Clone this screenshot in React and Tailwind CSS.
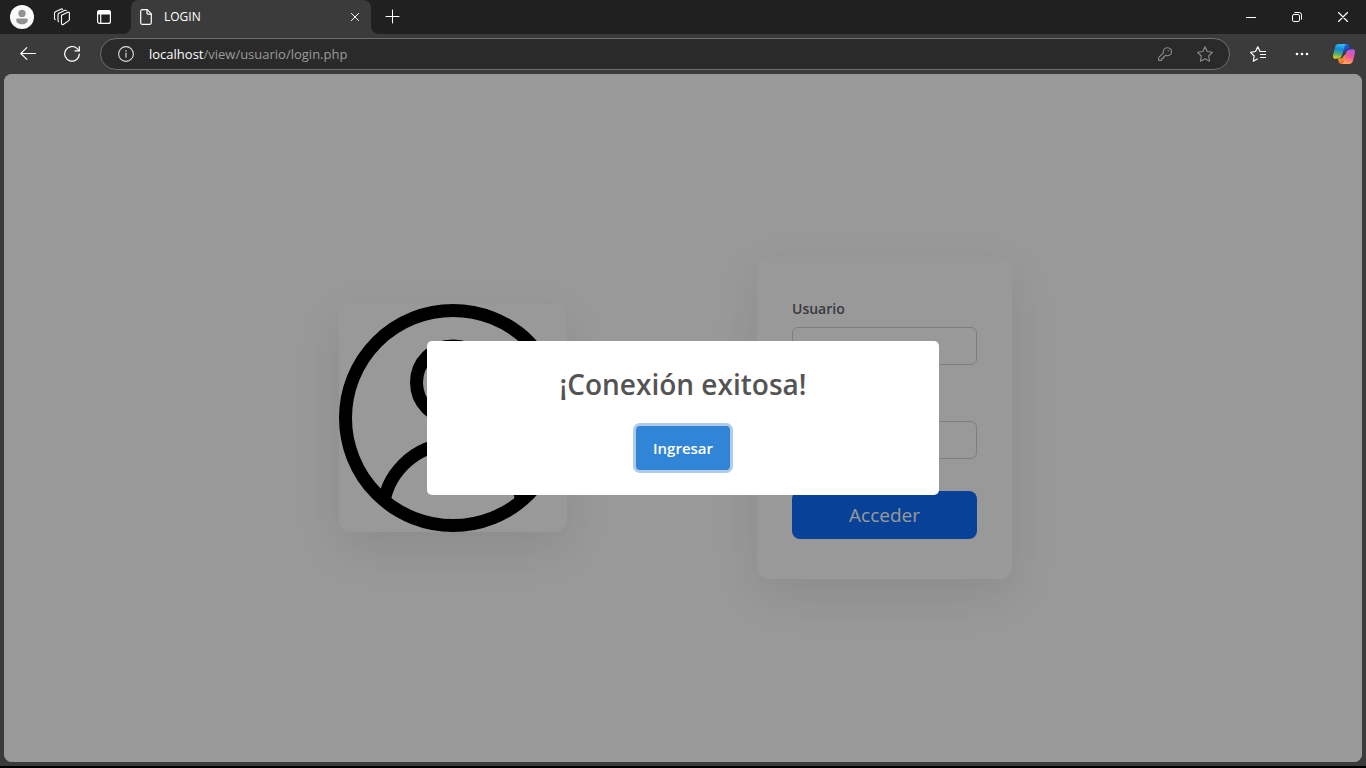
import React from "react";

const stroke = {
  fill: "none",
  stroke: "currentColor",
  strokeLinecap: "round",
  strokeLinejoin: "round",
  "aria-hidden": true,
};

function AvatarIcon() {
  return (
    <svg width="24" height="24" viewBox="0 0 24 24" aria-hidden="true">
      <circle cx="12" cy="12" r="12" fill="#f9f9f9" />
      <circle cx="12" cy="8.4" r="3.6" fill="#919191" />
      <path d="M7.6 13.6h8.8a1.4 1.4 0 0 1 1.4 1.4c0 2.6-2.5 4.2-5.8 4.2S6.2 17.6 6.2 15a1.4 1.4 0 0 1 1.4-1.4z" fill="#919191" />
    </svg>
  );
}

function WorkspacesIcon() {
  return (
    <svg width="18" height="18" viewBox="0 0 18 18" strokeWidth="1.1" {...stroke}>
      <path d="M8.6 7.2 14.8 4.3c.9-.4 1.6.1 1.6 1v6c0 .7-.3 1.200-.9 1.600l-5.300 3.600c-.9.5-1.700.1-1.700-.9V8.800c0-.8-.2-1.300.1-1.600z" />
      <path d="M5.700 13.700c-.5-.2-.7-.6-.7-1.100V6.700c0-.7.3-1.200.9-1.500l6-2.900c.6-.2 1.100-.1 1.400.4" />
      <path d="M2.200 11.600c-.5-.2-.7-.6-.7-1.100V5.200c0-.7.3-1.200.9-1.500L8.300 1c.6-.2 1-.1 1.300.4" />
    </svg>
  );
}

function TabActionsIcon() {
  return (
    <svg width="14" height="14" viewBox="0 0 14 14" strokeWidth="1.2" {...stroke}>
      <rect x="0.6" y="0.6" width="12.8" height="12.8" rx="2" />
      <path d="M1 1h12v3H1z" fill="currentColor" />
      <path d="M3.7 4v9" />
    </svg>
  );
}

function PageIcon() {
  return (
    <svg width="12" height="16" viewBox="0 0 12 16" strokeWidth="1.2" {...stroke}>
      <path d="M2.2.7h5l4.1 4.2v8.9c0 .9-.6 1.5-1.5 1.5H2.2c-.9 0-1.5-.6-1.5-1.5V2.2C.7 1.3 1.3.7 2.2.7z" />
      <path d="M7 .9v3c0 .8.5 1.3 1.3 1.3h2.8" />
    </svg>
  );
}

function CrossIcon({ className }) {
  return (
    <svg className={className} viewBox="0 0 10 10" strokeWidth="1.2" {...stroke}>
      <path d="M.5.5l9 9M9.5.5l-9 9" />
    </svg>
  );
}

function PlusIcon() {
  return (
    <svg width="16" height="16" viewBox="0 0 16 16" strokeWidth="1" {...stroke}>
      <path d="M7.5 1v13M1 7.5h13" />
    </svg>
  );
}

function MinimizeIcon() {
  return (
    <svg width="10" height="10" viewBox="0 0 10 10" strokeWidth="1" {...stroke} strokeLinecap="butt">
      <path d="M0 5.5h10" />
    </svg>
  );
}

function RestoreIcon() {
  return (
    <svg width="10" height="10" viewBox="0 0 10 10" strokeWidth="1" {...stroke}>
      <rect x=".5" y="2.5" width="7" height="7" rx="1.4" />
      <path d="M2.8.5h4.4a2.3 2.3 0 0 1 2.3 2.3v4.4" />
    </svg>
  );
}

function BackIcon() {
  return (
    <svg width="16" height="14" viewBox="0 0 16 14" strokeWidth="1.1" {...stroke}>
      <path d="M15.500 6.500H.8M6.800.6L.8 6.500l6 5.900" />
    </svg>
  );
}

function ReloadIcon() {
  return (
    <svg width="16" height="16" viewBox="0 0 16 16" strokeWidth="1.2" {...stroke}>
      <path d="M15.3 8a7.3 7.3 0 1 1-2.1-5.3l2 2" />
      <path d="M15.3.6v4.300H11" />
    </svg>
  );
}

function InfoIcon() {
  return (
    <svg width="16" height="16" viewBox="0 0 16 16" strokeWidth="1.1" {...stroke}>
      <circle cx="8" cy="8" r="7.4" />
      <path d="M8 7.3v4" />
      <circle cx="8" cy="5" r=".8" fill="currentColor" stroke="none" />
    </svg>
  );
}

function KeyIcon() {
  return (
    <svg width="14" height="14" viewBox="0 0 14 14" strokeWidth="1.1" {...stroke}>
      <path d="M9.3.7a4 4 0 0 0-3.9 5.1L1 10.2c-.3.3-.4.6-.4 1v1.200c0 .6.400 1 1 1h1.200c.6 0 1-.4 1-1v-1h.9c.6 0 1-.4 1-1v-.9h.7l1.300-1.300A4 4 0 1 0 9.300.7z" />
      <circle cx="10.3" cy="3.8" r=".7" fill="currentColor" stroke="none" />
    </svg>
  );
}

function StarIcon() {
  return (
    <svg width="16" height="16" viewBox="0 0 16 16" strokeWidth="1.1" {...stroke}>
      <path d="M8 .8l2.200 4.700 5.200.8-3.700 3.700.8 5.200L8 12.700l-4.500 2.500.8-5.200L.6 6.300l5.200-.8z" />
    </svg>
  );
}

function FavoritesIcon() {
  return (
    <svg width="16" height="16" viewBox="0 0 16 16" strokeWidth="1.2" {...stroke}>
      <path d="M10 5.500L7.800.8 5.500 5.500l-5 .8 3.700 3.700-.9 5.200 4-2.200" />
      <path d="M10.500 5.500h5M10.500 8.500h5M10.500 11.500h5" />
    </svg>
  );
}

function MoreIcon() {
  return (
    <svg width="14" height="4" viewBox="0 0 14 4" fill="currentColor" aria-hidden="true">
      <circle cx="2" cy="2" r="1.3" />
      <circle cx="7" cy="2" r="1.3" />
      <circle cx="12" cy="2" r="1.3" />
    </svg>
  );
}

function CopilotIcon() {
  return (
    <svg width="22" height="20" viewBox="0 0 22 20" aria-hidden="true">
      <defs>
        <linearGradient id="cp-left" x1="8" y1="0" x2="5" y2="15" gradientUnits="userSpaceOnUse">
          <stop offset="0" stopColor="#2fc0f5" />
          <stop offset=".35" stopColor="#1789dc" />
          <stop offset=".68" stopColor="#4bae72" />
          <stop offset="1" stopColor="#f4cf10" />
        </linearGradient>
        <linearGradient id="cp-right" x1="18" y1="5" x2="14" y2="20" gradientUnits="userSpaceOnUse">
          <stop offset="0" stopColor="#ab5cf0" />
          <stop offset=".5" stopColor="#f0569a" />
          <stop offset="1" stopColor="#ffab55" />
        </linearGradient>
        <linearGradient id="cp-top" x1="11" y1="0" x2="15" y2="6" gradientUnits="userSpaceOnUse">
          <stop offset="0" stopColor="#1f70e8" />
          <stop offset="1" stopColor="#1b45c4" />
        </linearGradient>
        <linearGradient id="cp-bottom" x1="6" y1="14" x2="10" y2="20" gradientUnits="userSpaceOnUse">
          <stop offset="0" stopColor="#f7b02c" />
          <stop offset="1" stopColor="#ee5038" />
        </linearGradient>
      </defs>
      <path d="M10 0h3.500c1.500 0 2.300.8 2.700 2.200l.8 3.300h-2.500c-1.700 0-2.600.8-3.100 2.500L9 10z" fill="url(#cp-top)" />
      <path d="M12 20H8.500c-1.500 0-2.300-.8-2.700-2.200L5 14.500h2.500c1.700 0 2.600-.8 3.100-2.500L13 10z" fill="url(#cp-bottom)" />
      <path d="M5.800 0h8c-1.500.2-2.100 1.300-2.500 2.700L9 11.200c-.5 1.800-1.400 2.700-3.200 3.100-1.300.3-2.800.7-4 .5C.2 14.500-.2 12.700.1 11L2 3.200C2.500 1.200 3.700 0 5.800 0z" fill="url(#cp-left)" />
      <path d="M16.200 20h-8c1.500-.2 2.100-1.300 2.500-2.700L13 8.800c.5-1.800 1.400-2.700 3.200-3.100 1.300-.3 2.800-.7 4-.5 1.600.3 2 2.100 1.700 3.800L20 16.800c-.5 2-1.700 3.200-3.800 3.200z" fill="url(#cp-right)" />
    </svg>
  );
}

function UserPicture() {
  return (
    <svg className="block w-full" viewBox="0 0 228 228" fill="none" stroke="#000" strokeWidth="13" role="img" aria-label="Usuario">
      <clipPath id="user-disc">
        <circle cx="114" cy="114" r="107" />
      </clipPath>
      <circle cx="114" cy="114" r="107.5" />
      <circle cx="114" cy="78.5" r="36.5" />
      <circle cx="114" cy="210" r="70" clipPath="url(#user-disc)" />
    </svg>
  );
}

function BarButton({ label, className, children }) {
  return (
    <button type="button" aria-label={label} className={`flex h-full shrink-0 items-center justify-center ${className}`}>
      {children}
    </button>
  );
}

function TabStrip() {
  return (
    <header className="flex h-[34px] bg-[#3b3b3b] text-white">
      <div className="flex shrink-0 rounded-br-lg bg-[#202020] pr-[5px] pl-[2px]">
        <BarButton label="Perfil" className="w-10"><AvatarIcon /></BarButton>
        <BarButton label="Espacios de trabajo" className="w-10"><WorkspacesIcon /></BarButton>
        <BarButton label="Acciones de pestaña" className="w-11"><TabActionsIcon /></BarButton>
      </div>
      <div className="w-60 shrink-0 bg-[#202020]">
        <div className="flex h-full items-center rounded-t-lg bg-[#3b3b3b] pr-1 pl-[9px]">
          <PageIcon />
          <span className="ml-3 flex-1 truncate text-[12px] leading-4">LOGIN</span>
          <BarButton label="Cerrar pestaña" className="w-6"><CrossIcon className="size-2" /></BarButton>
        </div>
      </div>
      <div className="flex flex-1 justify-between rounded-bl-lg bg-[#202020]">
        <BarButton label="Nueva pestaña" className="w-11"><PlusIcon /></BarButton>
        <div className="flex">
          <BarButton label="Minimizar" className="w-[46px]"><MinimizeIcon /></BarButton>
          <BarButton label="Restaurar" className="w-[46px]"><RestoreIcon /></BarButton>
          <BarButton label="Cerrar" className="w-[46px]"><CrossIcon className="size-[10px]" /></BarButton>
        </div>
      </div>
    </header>
  );
}

function Toolbar() {
  return (
    <nav className="flex h-10 items-center pr-[2px] pl-[6px] text-white">
      <BarButton label="Atrás" className="w-11"><BackIcon /></BarButton>
      <BarButton label="Actualizar" className="w-11"><ReloadIcon /></BarButton>
      <div className="mx-[6px] flex h-8 flex-1 items-center rounded-full border border-[#6e6e6e] bg-[#2a2a2a] pr-[4px] pl-1">
        <BarButton label="Información del sitio" className="w-[42px] text-[#dedede]"><InfoIcon /></BarButton>
        <div role="textbox" aria-label="Dirección" tabIndex={0} className="ml-[2px] flex-1 truncate text-[13px] leading-5 text-[#9b9b9b]">
          <span className="text-white">localhost</span>/view/usuario/login.php
        </div>
        <div className="flex h-full text-[#8c8c8c]">
          <BarButton label="Contraseñas" className="w-10"><KeyIcon /></BarButton>
          <BarButton label="Agregar a favoritos" className="w-10"><StarIcon /></BarButton>
        </div>
      </div>
      <BarButton label="Favoritos" className="w-11"><FavoritesIcon /></BarButton>
      <BarButton label="Más" className="w-11"><MoreIcon /></BarButton>
      <BarButton label="Copilot" className="w-10"><CopilotIcon /></BarButton>
    </nav>
  );
}

function Field({ id, label, type, labelClass = "" }) {
  return (
    <div>
      <label htmlFor={id} className={`mb-[6px] block text-[14px] leading-6 font-semibold text-[#5c636a] ${labelClass}`}>{label}</label>
      <input id={id} type={type} aria-label={label} className="block h-[38px] w-full rounded-md border border-[#ced4da] bg-white px-3 text-[15px]" />
    </div>
  );
}

function LoginPage() {
  return (
    <main className="flex flex-1 items-center justify-center gap-[190px] pr-[15px]">
      <div className="w-[228px] rounded-xl shadow-[0_16px_48px_rgba(0,0,0,0.09)]">
        <UserPicture />
      </div>
      <form className="flex w-[255px] flex-col rounded-xl bg-white px-[35px] py-10 shadow-[0_16px_48px_rgba(0,0,0,0.09)]">
        <div className="flex flex-col gap-[26px]">
          <Field id="usuario" label="Usuario" type="text" />
          <Field id="clave" label="Contraseña" type="password" labelClass="invisible" />
        </div>
        <button type="button" className="mt-8 h-12 rounded-lg bg-[#0d6efd] text-[19px] text-white">Acceder</button>
      </form>
    </main>
  );
}

function SuccessDialog() {
  return (
    <div className="absolute inset-0 flex items-center justify-center bg-black/40">
      <div role="alertdialog" aria-labelledby="dialog-title" className="flex w-lg flex-col items-center rounded-[5px] bg-white px-5 pt-6 pb-[25px]">
        <h2 id="dialog-title" className="text-[28px] leading-[38px] font-semibold text-[#545454]">¡Conexión exitosa!</h2>
        <button type="button" className="mt-[23px] h-11 rounded-[4px] bg-[#3085d6] px-[17px] text-[15px] font-semibold text-white ring-3 ring-[#b0cbe8]">
          Ingresar
        </button>
      </div>
    </div>
  );
}

export default function App() {
  return (
    <div className="flex min-h-screen flex-col border-b-2 border-black bg-[#3b3b3b] font-['Open_Sans','Noto_Sans',sans-serif]">
      <TabStrip />
      <Toolbar />
      <div className="relative mx-1 mb-1 flex flex-1 overflow-hidden rounded-lg bg-white">
        <LoginPage />
        <SuccessDialog />
      </div>
    </div>
  );
}
